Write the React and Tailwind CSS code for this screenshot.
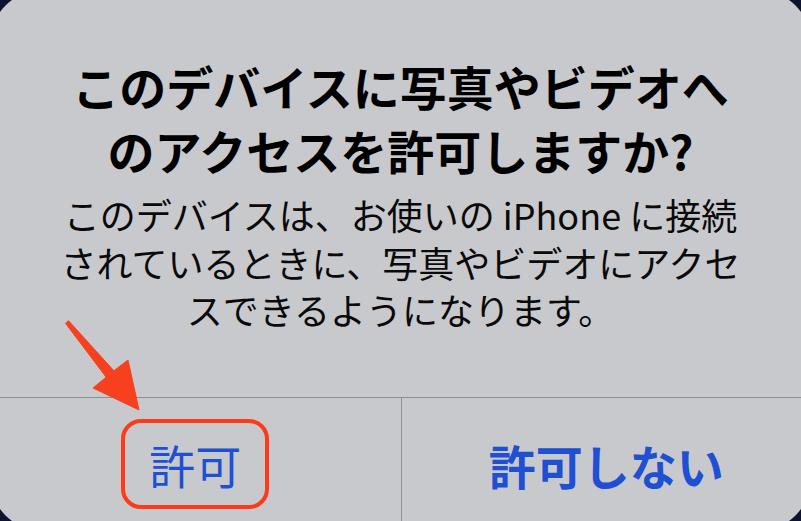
import React from 'react';

const jp = { fontFamily: '"Noto Sans CJK JP", "Noto Sans", sans-serif' };

// 注釈の矢印
function Arrow() {
  return (
    <svg className="absolute inset-0 pointer-events-none" width="801" height="521" viewBox="0 0 801 521">
      <polygon
        points="68.5,320.7 113.9,370.8 128,360 139,410 93,388 106.2,377.2 65.5,323.3"
        fill="#f6401e"
        strokeLinejoin="round"
        stroke="#f6401e"
        strokeWidth="1"
      />
    </svg>
  );
}

export default function App() {
  return (
    <div className="relative w-[801px] h-[521px] overflow-hidden bg-[#0e1430]" style={jp}>
      <div className="-m-[10px] w-[821px] h-[541px] rounded-[53px] bg-[#c8c9cd] flex flex-col">
        <div className="pt-[64px] text-center text-black font-bold text-[47px] leading-[64px]">
          <div>このデバイスに写真やビデオへ</div>
          <div>のアクセスを許可しますか?</div>
        </div>
        <div className="mt-[9px] text-center text-[#0a0a0a] text-[36px] leading-[47.5px]">
          <div>このデバイスは、お使いの iPhone に接続</div>
          <div>されているときに、写真やビデオにアクセ</div>
          <div>スできるようになります。</div>
        </div>
        <div className="mt-[63px] h-px bg-[#8e8e93]" />
        <div className="grid grid-cols-2 flex-1">
          <div className="flex items-center justify-center">
            <span className="inline-flex items-center justify-center border-[4px] border-[#fb3b1c] rounded-[20px] px-[24px] py-[18px] text-[#1f4fd2] text-[46px] leading-none">
              許可
            </span>
          </div>
          <div className="flex items-center justify-center border-l border-[#8e8e93] text-[#1f4fd2] text-[47px] font-bold leading-none">
            許可しない
          </div>
        </div>
      </div>
      <Arrow />
    </div>
  );
}
